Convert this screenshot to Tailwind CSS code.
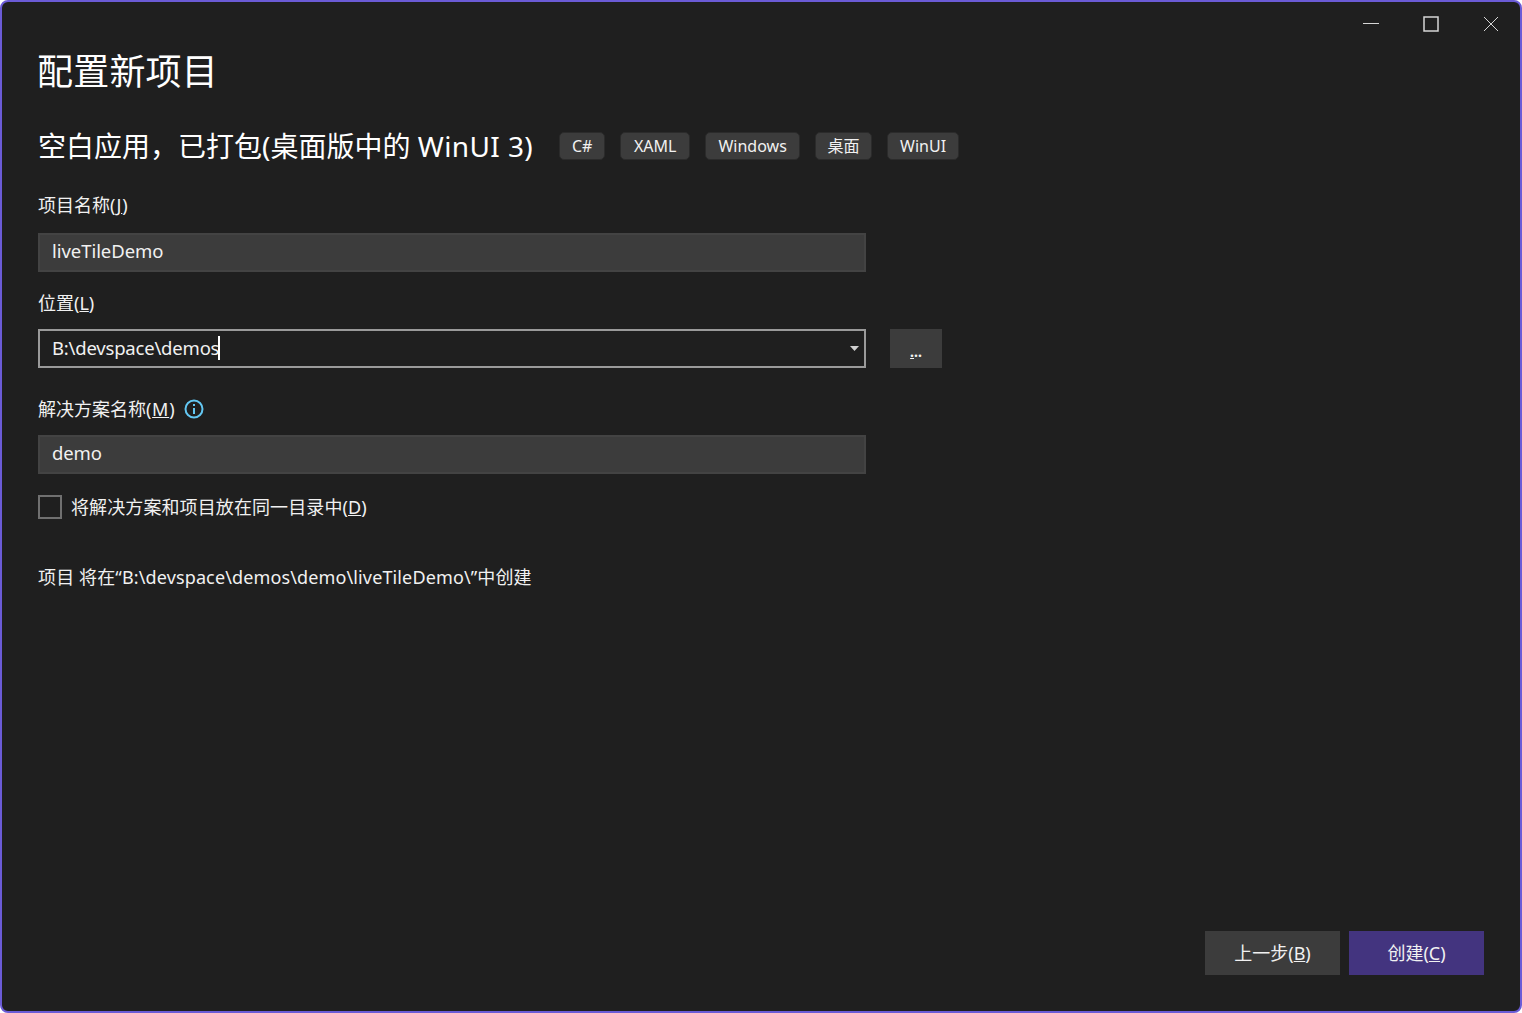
<!DOCTYPE html>
<html lang="zh-CN">
<head>
    <meta charset="UTF-8">
    <title>配置新项目</title>
    <script src="https://cdn.jsdelivr.net/npm/@tailwindcss/browser@4"></script>
</head>
<body class="bg-white font-['Noto_Sans','Noto_Sans_CJK_SC',sans-serif] text-[#f1f1f1]">
<div class="flex h-[1013px] w-[1522px] flex-col overflow-hidden rounded-[8px] border-2 border-[#6b5bd6] bg-[#1f1f1f] pl-[36px] pr-[36px]">

    <!-- window controls -->
    <div class="-mr-[37px] flex h-[44px] shrink-0 items-start justify-end text-[#d6d6d6]">
        <button class="flex h-[44px] w-[60px] items-center justify-center">
            <svg width="16" height="16" viewBox="0 0 16 16" fill="none" stroke="currentColor"><path d="M0 7.5h16"/></svg>
        </button>
        <button class="flex h-[44px] w-[60px] items-center justify-center">
            <svg width="16" height="16" viewBox="0 0 16 16" fill="none" stroke="currentColor" stroke-width="1.5"><rect x="1" y="1" width="14" height="14"/></svg>
        </button>
        <button class="flex h-[44px] w-[60px] items-center justify-center">
            <svg width="16" height="16" viewBox="0 0 16 16" fill="none" stroke="currentColor"><path d="M1 1l14 14M15 1L1 15"/></svg>
        </button>
    </div>

    <h1 class="-ml-px mt-px h-[50px] text-[36px] leading-[50px] font-normal tracking-[0.2px] text-white">配置新项目</h1>

    <div class="mt-[24px] flex h-[50px] items-center">
        <h2 class="text-[28px] leading-[50px] text-white">空白应用，已打包(桌面版中的 <span class="tracking-[0.4px]">WinUI 3)</span></h2>
        <div class="ml-[26px] flex gap-[15px] text-[16px]">
            <span class="flex h-[28px] w-[46px] items-center justify-center rounded-[5px] border border-[#2b2b2b] bg-[#3c3c3c]">C#</span>
            <span class="flex h-[28px] w-[70px] items-center justify-center rounded-[5px] border border-[#2b2b2b] bg-[#3c3c3c]">XAML</span>
            <span class="flex h-[28px] w-[95px] items-center justify-center rounded-[5px] border border-[#2b2b2b] bg-[#3c3c3c]">Windows</span>
            <span class="flex h-[28px] w-[57px] items-center justify-center rounded-[5px] border border-[#2b2b2b] bg-[#3c3c3c]">桌面</span>
            <span class="flex h-[28px] w-[72px] items-center justify-center rounded-[5px] border border-[#2b2b2b] bg-[#3c3c3c]">WinUI</span>
        </div>
    </div>

    <label class="mt-[21px] block h-[26px] text-[18px] leading-[26px]">项目名称<span class="tracking-[1px]">(<u>J</u>)</span></label>
    <div class="mt-[15px] flex h-[39px] w-[828px] items-center border-2 border-[#434343] bg-[#3c3c3c] px-[12px] pb-[3px] text-[18.5px] tracking-[-0.05px]">liveTileDemo</div>

    <label class="mt-[18px] block h-[26px] text-[18px] leading-[26px]">位置(<u>L</u>)</label>
    <div class="mt-[13px] flex h-[39px] items-center gap-[24px]">
        <div class="flex h-[39px] w-[828px] items-center justify-between border-2 border-[#9a9a9a] bg-[#1f1f1f] pb-[2px] pl-[12px] pr-[5px] text-[18.5px] tracking-[-0.2px]">
            <span class="flex items-center">B:\devspace\demos<span class="-ml-px h-[24px] w-[2px] bg-white"></span></span>
            <svg width="9" height="5" viewBox="0 0 9 5" fill="#d0d0d0" class="mt-[2px]"><path d="M0 0h9L4.5 5z"/></svg>
        </div>
        <button class="h-[39px] w-[52px] bg-[#3c3c3c] pt-[6px] text-[14px] leading-[20px] font-bold"><u>.</u>..</button>
    </div>

    <div class="mt-[28px] flex h-[26px] items-center gap-[9px]">
        <label class="text-[18px] leading-[26px]">解决方案名称<span class="tracking-[0.7px]">(<u>M</u>)</span></label>
        <svg width="20" height="20" viewBox="0 0 20 20" fill="none" stroke="#63c7f2" stroke-width="2"><circle cx="10" cy="10" r="8.5"/><path d="M10 9v6M10 5v2"/></svg>
    </div>
    <div class="mt-[13px] flex h-[39px] w-[828px] items-center border-2 border-[#434343] bg-[#3c3c3c] px-[12px] pb-[3px] text-[18.5px] tracking-[-0.1px]">demo</div>

    <div class="mt-[21px] flex h-[24px] items-center gap-[9px]">
        <span class="h-[24px] w-[24px] border-2 border-[#707070]"></span>
        <label class="text-[18px] leading-[24px] tracking-[0.1px]">将解决方案和项目放在同一目录中(<u>D</u>)</label>
    </div>

    <p class="mt-[45px] h-[26px] text-[18px] leading-[26px] tracking-[0.13px]">项目 将在“B:\devspace\demos\demo\liveTileDemo\”中创建</p>

    <div class="mt-auto mb-[36px] flex justify-end gap-[9px] text-[18px]">
        <button class="h-[44px] w-[135px] bg-[#3c3c3c]">上一步(<u>B</u>)</button>
        <button class="h-[44px] w-[135px] bg-[#43347f]">创建(<u>C</u>)</button>
    </div>
</div>
</body>
</html>
